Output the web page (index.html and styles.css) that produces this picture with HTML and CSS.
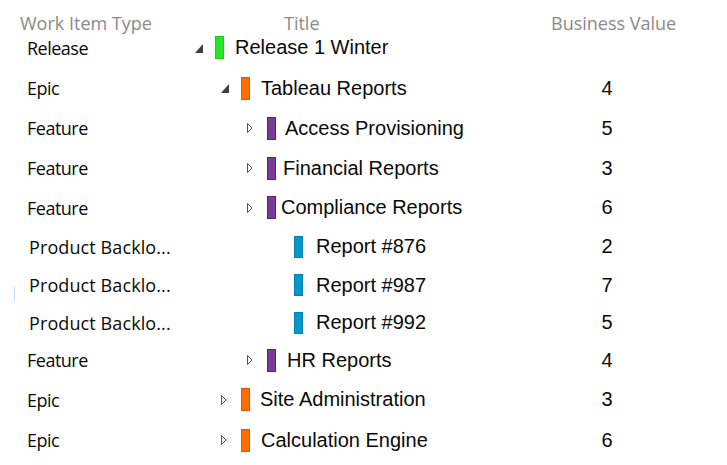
FILE: index.html
```html
<!DOCTYPE html>
<html lang="en">
<head>
<meta charset="utf-8">
<title>Backlog</title>
<link rel="stylesheet" href="styles.css">
</head>
<body>
<div class="backlog">
  <div class="head">
    <div class="h-type">Work Item Type</div>
    <div class="h-title">Title</div>
    <div class="h-value">Business Value</div>
  </div>

  <div class="row h41">
    <div class="type">Release</div>
    <div class="title lvl0">
      <span class="tog"><svg width="8" height="9" viewBox="0 0 8 9"><polygon points="8,0 8,9 0,9" fill="#3f3f3f"/></svg></span>
      <span class="bar release"></span>
      <span class="name">Release 1 Winter</span>
    </div>
    <div class="value"></div>
  </div>

  <div class="row h40">
    <div class="type">Epic</div>
    <div class="title lvl1">
      <span class="tog"><svg width="8" height="9" viewBox="0 0 8 9"><polygon points="8,0 8,9 0,9" fill="#3f3f3f"/></svg></span>
      <span class="bar epic"></span>
      <span class="name">Tableau Reports</span>
    </div>
    <div class="value">4</div>
  </div>

  <div class="row h40">
    <div class="type">Feature</div>
    <div class="title lvl2">
      <span class="tog"><svg width="6" height="10" viewBox="0 0 6 10"><polygon points="0.5,0.5 5,5 0.5,9.5" fill="#fff" stroke="#555" stroke-width="1"/></svg></span>
      <span class="bar feature"></span>
      <span class="name">Access Provisioning</span>
    </div>
    <div class="value">5</div>
  </div>

  <div class="row h40">
    <div class="type">Feature</div>
    <div class="title lvl2">
      <span class="tog"><svg width="6" height="10" viewBox="0 0 6 10"><polygon points="0.5,0.5 5,5 0.5,9.5" fill="#fff" stroke="#555" stroke-width="1"/></svg></span>
      <span class="bar feature"></span>
      <span class="name tight">Financial Reports</span>
    </div>
    <div class="value">3</div>
  </div>

  <div class="row h39">
    <div class="type">Feature</div>
    <div class="title lvl2">
      <span class="tog"><svg width="6" height="10" viewBox="0 0 6 10"><polygon points="0.5,0.5 5,5 0.5,9.5" fill="#fff" stroke="#555" stroke-width="1"/></svg></span>
      <span class="bar feature"></span>
      <span class="name tighter">Compliance Reports</span>
    </div>
    <div class="value">6</div>
  </div>

  <div class="row h39">
    <div class="type pbi">Product Backlo...</div>
    <div class="title lvl3">
      <span class="tog"></span>
      <span class="bar story"></span>
      <span class="name">Report #876</span>
    </div>
    <div class="value">2</div>
  </div>

  <div class="row h38 mark">
    <div class="type pbi">Product Backlo...</div>
    <div class="title lvl3">
      <span class="tog"></span>
      <span class="bar story"></span>
      <span class="name">Report #987</span>
    </div>
    <div class="value">7</div>
  </div>

  <div class="row h37">
    <div class="type pbi">Product Backlo...</div>
    <div class="title lvl3">
      <span class="tog"></span>
      <span class="bar story"></span>
      <span class="name">Report #992</span>
    </div>
    <div class="value">5</div>
  </div>

  <div class="row h38">
    <div class="type">Feature</div>
    <div class="title lvl2">
      <span class="tog"><svg width="6" height="10" viewBox="0 0 6 10"><polygon points="0.5,0.5 5,5 0.5,9.5" fill="#fff" stroke="#555" stroke-width="1"/></svg></span>
      <span class="bar feature"></span>
      <span class="name loose">HR Reports</span>
    </div>
    <div class="value">4</div>
  </div>

  <div class="row h41">
    <div class="type">Epic</div>
    <div class="title lvl1">
      <span class="tog"><svg width="6" height="10" viewBox="0 0 6 10"><polygon points="0.5,0.5 5,5 0.5,9.5" fill="#fff" stroke="#555" stroke-width="1"/></svg></span>
      <span class="bar epic"></span>
      <span class="name nudge">Site Administration</span>
    </div>
    <div class="value">3</div>
  </div>

  <div class="row h40">
    <div class="type">Epic</div>
    <div class="title lvl1">
      <span class="tog"><svg width="6" height="10" viewBox="0 0 6 10"><polygon points="0.5,0.5 5,5 0.5,9.5" fill="#fff" stroke="#555" stroke-width="1"/></svg></span>
      <span class="bar epic"></span>
      <span class="name">Calculation Engine</span>
    </div>
    <div class="value">6</div>
  </div>
</div>
</body>
</html>
```
FILE: styles.css
```css
* { box-sizing: border-box; }

html, body {
  margin: 0;
  padding: 0;
  background: #ffffff;
}

.backlog {
  width: 727px;
  height: 465px;
  overflow: hidden;
}

.head {
  display: grid;
  grid-template-columns: 190px 361px auto;
  height: 27px;
  align-items: start;
  padding-top: 11px;
  font-family: "Open Sans", sans-serif;
  font-size: 18px;
  color: #8a8a8a;
  line-height: 24px;
}

.h-type { padding-left: 20px; white-space: nowrap; }
.h-title { padding-left: 94px; }
.h-value { white-space: nowrap; }

.row {
  display: grid;
  grid-template-columns: 190px 380px 74px;
  align-items: center;
  position: relative;
}

.h41 { height: 41px; }
.h40 { height: 40px; }
.h39 { height: 39px; }
.h38 { height: 38px; }
.h37 { height: 37px; }

.type {
  padding-left: 27px;
  font-family: "Open Sans", sans-serif;
  font-size: 18px;
  font-weight: 500;
  letter-spacing: -0.5px;
  color: #0a0a0a;
  white-space: nowrap;
}

.type.pbi { padding-left: 29px; letter-spacing: 0.1px; }

.mark::before {
  content: "";
  position: absolute;
  left: 14px;
  top: 21px;
  width: 1px;
  height: 15px;
  background: #c9d9f2;
}

.title {
  display: flex;
  align-items: center;
  font-family: "Liberation Sans", Arial, sans-serif;
  font-size: 20px;
  color: #0a0a0a;
  white-space: nowrap;
}

.lvl0 { padding-left: 5px; }
.lvl1 { padding-left: 31px; }
.lvl2 { padding-left: 57px; }
.lvl3 { padding-left: 84px; }

.tog {
  width: 8px;
  height: 10px;
  margin-right: 12px;
  display: flex;
  align-items: flex-end;
}

.tog svg { display: block; }

.bar {
  width: 9px;
  height: 23px;
  margin-right: 11px;
  border: 1px solid;
}

.lvl2 .bar { margin-right: 9px; }
.lvl3 .bar { margin-right: 13px; height: 22px; }

.name.tight { margin-left: -2px; }
.name.tighter { margin-left: -4px; }
.name.nudge { margin-left: -1px; }
.name.loose { margin-left: 2px; }

.release { background: #24e824; border-color: #1ccc1c; }
.epic { background: #ff7000; border-color: #e85400; }
.feature { background: #7a3a98; border-color: #58207a; }
.story { background: #0099cc; border-color: #0a80b2; }

.value {
  text-align: center;
  font-family: "Liberation Sans", Arial, sans-serif;
  font-size: 20px;
  color: #0a0a0a;
}
```
